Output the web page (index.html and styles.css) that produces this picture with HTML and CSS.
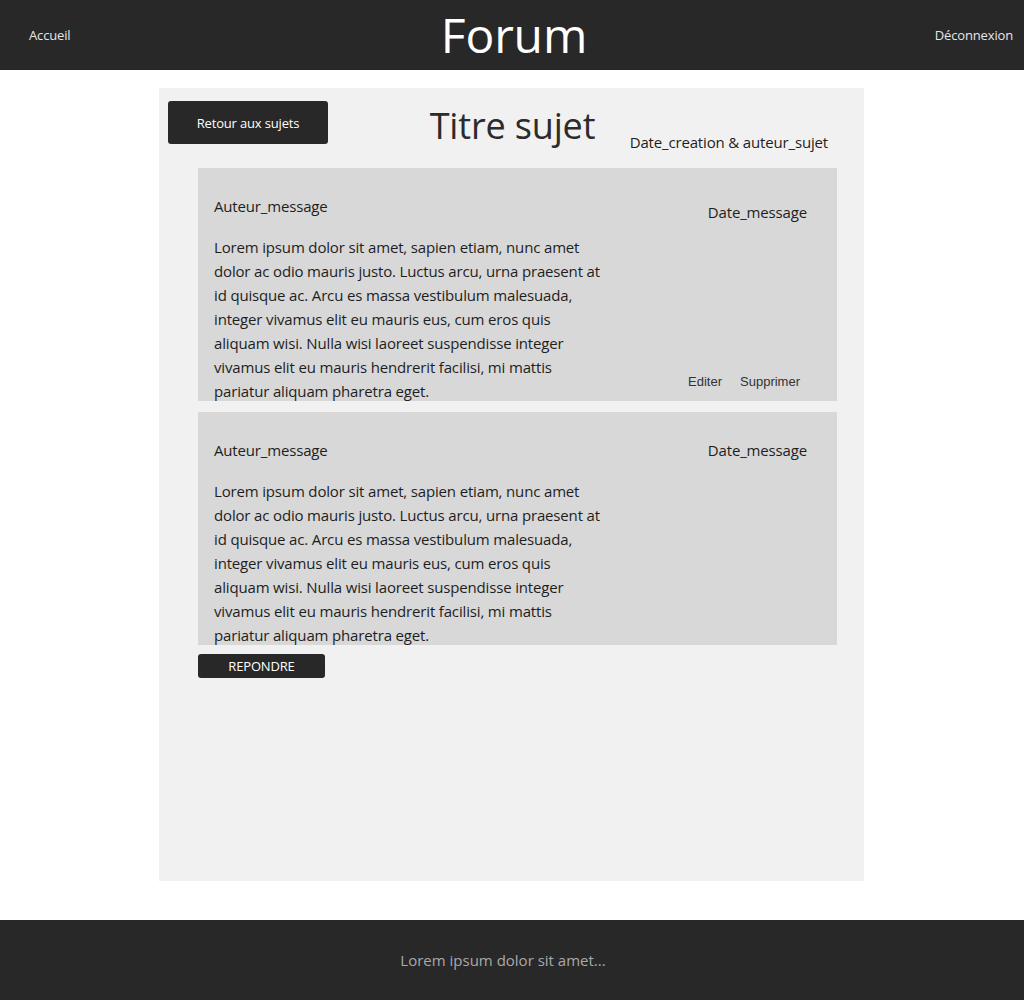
FILE: index.html
```html
<!DOCTYPE html>
<html lang="fr">
<head>
<meta charset="utf-8">
<title>Forum</title>
<link rel="stylesheet" href="styles.css">
</head>
<body>
<header class="site-header">
  <a class="nav-link nav-left" href="#">Accueil</a>
  <h1 class="site-title">Forum</h1>
  <a class="nav-link nav-right" href="#">Déconnexion</a>
</header>
<main class="topic">
  <div class="topic-head">
    <a class="btn-back" href="#">Retour aux sujets</a>
    <h2 class="topic-title">Titre sujet</h2>
    <p class="topic-meta">Date_creation &amp; auteur_sujet</p>
  </div>
  <div class="messages">
    <article class="message">
      <div class="message-main">
        <p class="message-author">Auteur_message</p>
        <p class="message-text">Lorem ipsum dolor sit amet, sapien etiam, nunc amet dolor ac odio mauris justo. Luctus arcu, urna praesent at id quisque ac. Arcu es massa vestibulum malesuada, integer vivamus elit eu mauris eus, cum eros quis aliquam wisi. Nulla wisi laoreet suspendisse integer vivamus elit eu mauris hendrerit facilisi, mi mattis pariatur aliquam pharetra eget.</p>
      </div>
      <div class="message-side">
        <p class="message-date message-date-low">Date_message</p>
        <div class="message-actions">
          <a href="#" class="action">Editer</a>
          <a href="#" class="action">Supprimer</a>
        </div>
      </div>
    </article>
    <article class="message">
      <div class="message-main">
        <p class="message-author">Auteur_message</p>
        <p class="message-text">Lorem ipsum dolor sit amet, sapien etiam, nunc amet dolor ac odio mauris justo. Luctus arcu, urna praesent at id quisque ac. Arcu es massa vestibulum malesuada, integer vivamus elit eu mauris eus, cum eros quis aliquam wisi. Nulla wisi laoreet suspendisse integer vivamus elit eu mauris hendrerit facilisi, mi mattis pariatur aliquam pharetra eget.</p>
      </div>
      <div class="message-side">
        <p class="message-date">Date_message</p>
      </div>
    </article>
    <a class="btn-reply" href="#">REPONDRE</a>
  </div>
</main>
<footer class="site-footer">
  <p class="footer-text">Lorem ipsum dolor sit amet...</p>
</footer>
</body>
</html>
```

FILE: styles.css
```css
* { box-sizing: border-box; }
html, body { margin: 0; padding: 0; }
body {
  font-family: "Open Sans", "Liberation Sans", sans-serif;
  color: #1e1e1e;
  background: #fff;
  letter-spacing: -0.01em;
}
p, h1, h2 { margin: 0; font-weight: 400; }
a { text-decoration: none; }

.site-header {
  height: 70px;
  background: #282828;
  display: grid;
  grid-template-columns: 1fr auto 1fr;
  align-items: center;
  padding: 0 11px;
}
.nav-link {
  color: #e6e6e6;
  font-size: 13px;
}
.nav-left { justify-self: start; margin-left: 18px; }
.nav-right { justify-self: end; }
.site-title {
  color: #fff;
  font-size: 48px;
  line-height: 70px;
  margin-left: 4px;
}

.topic {
  width: 705px;
  height: 793px;
  margin: 18px 0 39px 159px;
  background: #f1f1f1;
  padding: 13px 0 0;
}
.topic-head {
  display: grid;
  grid-template-columns: 1fr auto 1fr;
  align-items: start;
  padding-left: 9px;
}
.btn-back {
  justify-self: start;
  width: 160px;
  height: 43px;
  background: #282828;
  color: #fff;
  font-size: 13px;
  border-radius: 3px;
  display: flex;
  align-items: center;
  justify-content: center;
}
.topic-title {
  font-size: 36px;
  line-height: 49px;
  color: #2b2b2b;
  margin-left: -7px;
}
.topic-meta {
  justify-self: end;
  align-self: end;
  font-size: 15px;
  line-height: 20px;
  margin-right: 36px;
  margin-bottom: -2px;
}

.messages {
  margin: 18px 27px 0 39px;
  display: flex;
  flex-direction: column;
  align-items: flex-start;
}
.message {
  width: 100%;
  height: 233px;
  background: #d8d8d8;
  overflow: hidden;
  display: flex;
  justify-content: space-between;
  padding: 26px 30px 0 16px;
  margin-bottom: 11px;
}
.message:last-of-type { margin-bottom: 9px; }
.message-main { width: 390px; }
.message-author {
  font-size: 15px;
  line-height: 24px;
}
.message-text {
  font-size: 15px;
  line-height: 24px;
  margin-top: 17px;
}
.message-side {
  display: flex;
  flex-direction: column;
  justify-content: space-between;
  align-items: flex-end;
  padding-bottom: 12px;
}
.message-date {
  font-size: 15px;
  line-height: 24px;
}
.message-date-low { margin-top: 6px; }
.message-actions {
  display: flex;
  gap: 18px;
  margin-right: 7px;
}
.action {
  font-family: "Liberation Sans", Arial, sans-serif;
  font-size: 13px;
  letter-spacing: 0;
  color: #333;
}
.btn-reply {
  width: 127px;
  height: 24px;
  background: #282828;
  color: #fff;
  font-size: 13px;
  border-radius: 3px;
  display: flex;
  align-items: center;
  justify-content: center;
}

.site-footer {
  height: 80px;
  background: #282828;
  display: flex;
  align-items: center;
  justify-content: center;
  padding-right: 18px;
}
.footer-text {
  color: #a9a9a9;
  font-size: 15px;
  letter-spacing: 0;
}
```
